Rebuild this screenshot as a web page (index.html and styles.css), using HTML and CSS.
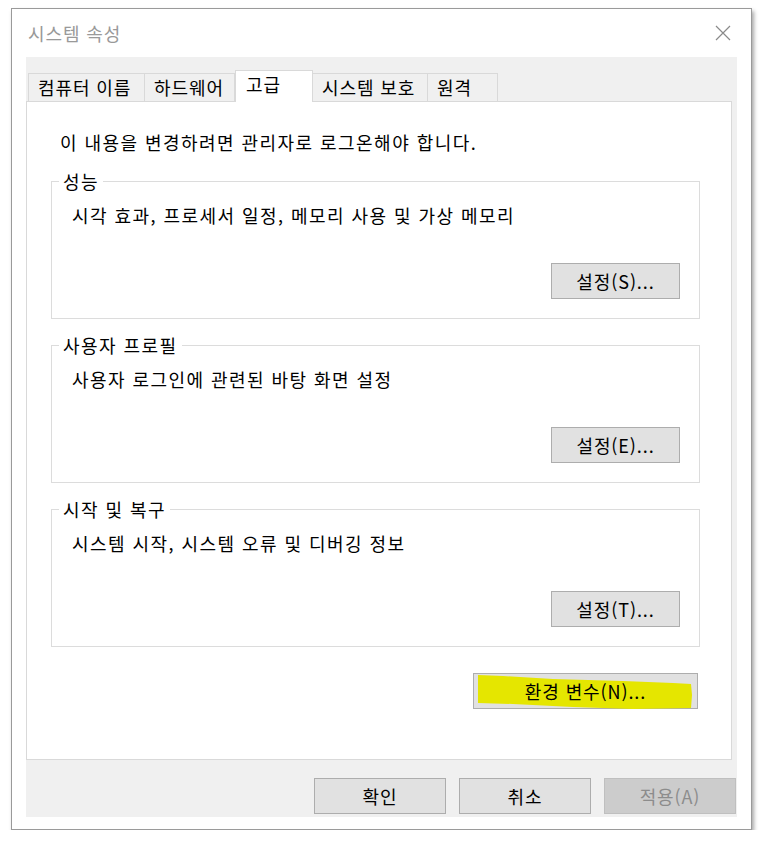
FILE: index.html
```html
<!DOCTYPE html>
<html lang="ko">
<head>
  <meta charset="UTF-8">
  <title>시스템 속성</title>
  <link rel="stylesheet" href="styles.css">
</head>
<body>
  <div class="window">
    <!-- 제목 표시줄 -->
    <div class="titlebar">
      <span class="title">시스템 속성</span>
      <svg class="close" width="16" height="16" viewBox="0 0 16 16">
        <path d="M1 1 L15 15 M15 1 L1 15" stroke="#8a8a8a" stroke-width="1.2" fill="none"/>
      </svg>
    </div>

    <div class="client">
      <!-- 탭 -->
      <div class="tabs">
        <div class="tab tab-name">컴퓨터 이름</div>
        <div class="tab tab-hw">하드웨어</div>
        <div class="tab active">고급</div>
        <div class="tab tab-protect">시스템 보호</div>
        <div class="tab tab-remote">원격</div>
      </div>

      <div class="panel">
        <p class="notice">이 내용을 변경하려면 관리자로 로그온해야 합니다.</p>

        <fieldset class="group">
          <legend>성능</legend>
          <div class="desc">시각 효과, 프로세서 일정, 메모리 사용 및 가상 메모리</div>
          <div class="row"><button class="btn">설정(S)...</button></div>
        </fieldset>

        <fieldset class="group">
          <legend>사용자 프로필</legend>
          <div class="desc">사용자 로그인에 관련된 바탕 화면 설정</div>
          <div class="row"><button class="btn">설정(E)...</button></div>
        </fieldset>

        <fieldset class="group">
          <legend>시작 및 복구</legend>
          <div class="desc">시스템 시작, 시스템 오류 및 디버깅 정보</div>
          <div class="row"><button class="btn">설정(T)...</button></div>
        </fieldset>

        <div class="env-row">
          <button class="btn env">
            <!-- 형광펜 표시 -->
            <svg class="marker" width="225" height="40" viewBox="0 0 225 40">
              <path d="M5 2 L30 3 L80 6 L150 8 L200 10 L218 11 L219 22 L218 35 L160 36 L100 34 L40 31 L5 30 Z" fill="#e5e600"/>
            </svg>
            <span>환경 변수(N)...</span>
          </button>
        </div>
      </div>

      <!-- 하단 버튼 -->
      <div class="actions">
        <button class="btn">확인</button>
        <button class="btn">취소</button>
        <button class="btn" disabled>적용(A)</button>
      </div>
    </div>
  </div>
</body>
</html>
```

FILE: styles.css
```css
/* 기본 */
* {
  box-sizing: border-box;
}
body {
  margin: 0;
  background: #fff;
  color: #000;
  font-family: "Noto Sans CJK KR", "Noto Sans", sans-serif;
  font-size: 18px;
  letter-spacing: 1.45px;
}

/* 창 */
.window {
  width: 741px;
  height: 822px;
  margin: 8px 0 0 11px;
  border: 1px solid #9a9a9a;
  background: #fff;
  box-shadow: 2px 3px 4px rgba(0,0,0,0.35);
  padding: 0 14px 12px;
  display: flex;
  flex-direction: column;
}
.titlebar {
  height: 48px;
  display: flex;
  align-items: center;
  justify-content: space-between;
}
.title {
  margin-left: 2px;
  color: #999;
  letter-spacing: 0.9px;
}
.close {
  margin-right: 6px;
}

.client {
  flex: 1;
  background: #f0f0f0;
  display: flex;
  flex-direction: column;
}

/* 탭 */
.tabs {
  height: 44px;
  display: flex;
  align-items: flex-end;
  padding-left: 2px;
}
.tab {
  height: 28px;
  padding: 0 0 0 9px;
  border: 1px solid #d9d9d9;
  border-bottom: none;
  margin-left: -1px;
  line-height: 27px;
  background: #f0f0f0;
  letter-spacing: 0.9px;
  white-space: nowrap;
}
.tab-name { width: 117px; margin-left: 0; }
.tab-hw { width: 91px; }
.tab-protect { width: 116px; }
.tab-remote { width: 71px; }
.tab.active {
  width: 78px;
  height: 32px;
  margin: 0 0 -1px 0;
  padding-left: 10px;
  background: #fff;
  position: relative;
  z-index: 1;
}

.panel {
  height: 659px;
  margin-right: 5px;
  background: #fff;
  border: 1px solid #d9d9d9;
  padding: 28px 31px 0 24px;
}
.notice {
  margin: 0 0 15px 9px;
  line-height: 24px;
}

/* 그룹 상자 */
.group {
  margin: 0 0 14px;
  border: 1px solid #dcdcdc;
  padding: 10px 19px 19px 20px;
}
.group legend {
  padding: 0 4px;
  margin-left: -13px;
  line-height: 24px;
}
.desc {
  line-height: 24px;
}
.row {
  display: flex;
  justify-content: flex-end;
  margin-top: 36px;
}

/* 버튼 */
.btn {
  width: 129px;
  height: 36px;
  padding: 0;
  background: #e1e1e1;
  border: 1px solid #adadad;
  font: inherit;
  letter-spacing: 0.9px;
  color: #000;
}
.btn:disabled {
  background: #cccccc;
  border-color: #bfbfbf;
  color: #8c8c8c;
}

.env-row {
  display: flex;
  justify-content: flex-end;
  margin-top: 26px;
  padding-right: 2px;
}
.env {
  width: 225px;
  position: relative;
}
.env .marker {
  position: absolute;
  left: -1px;
  top: -1px;
}
.env span {
  position: relative;
}

.actions {
  flex: 1;
  display: flex;
  justify-content: flex-end;
  gap: 13px;
  padding: 18px 1px 0 0;
}
.actions .btn {
  width: 132px;
}
```
